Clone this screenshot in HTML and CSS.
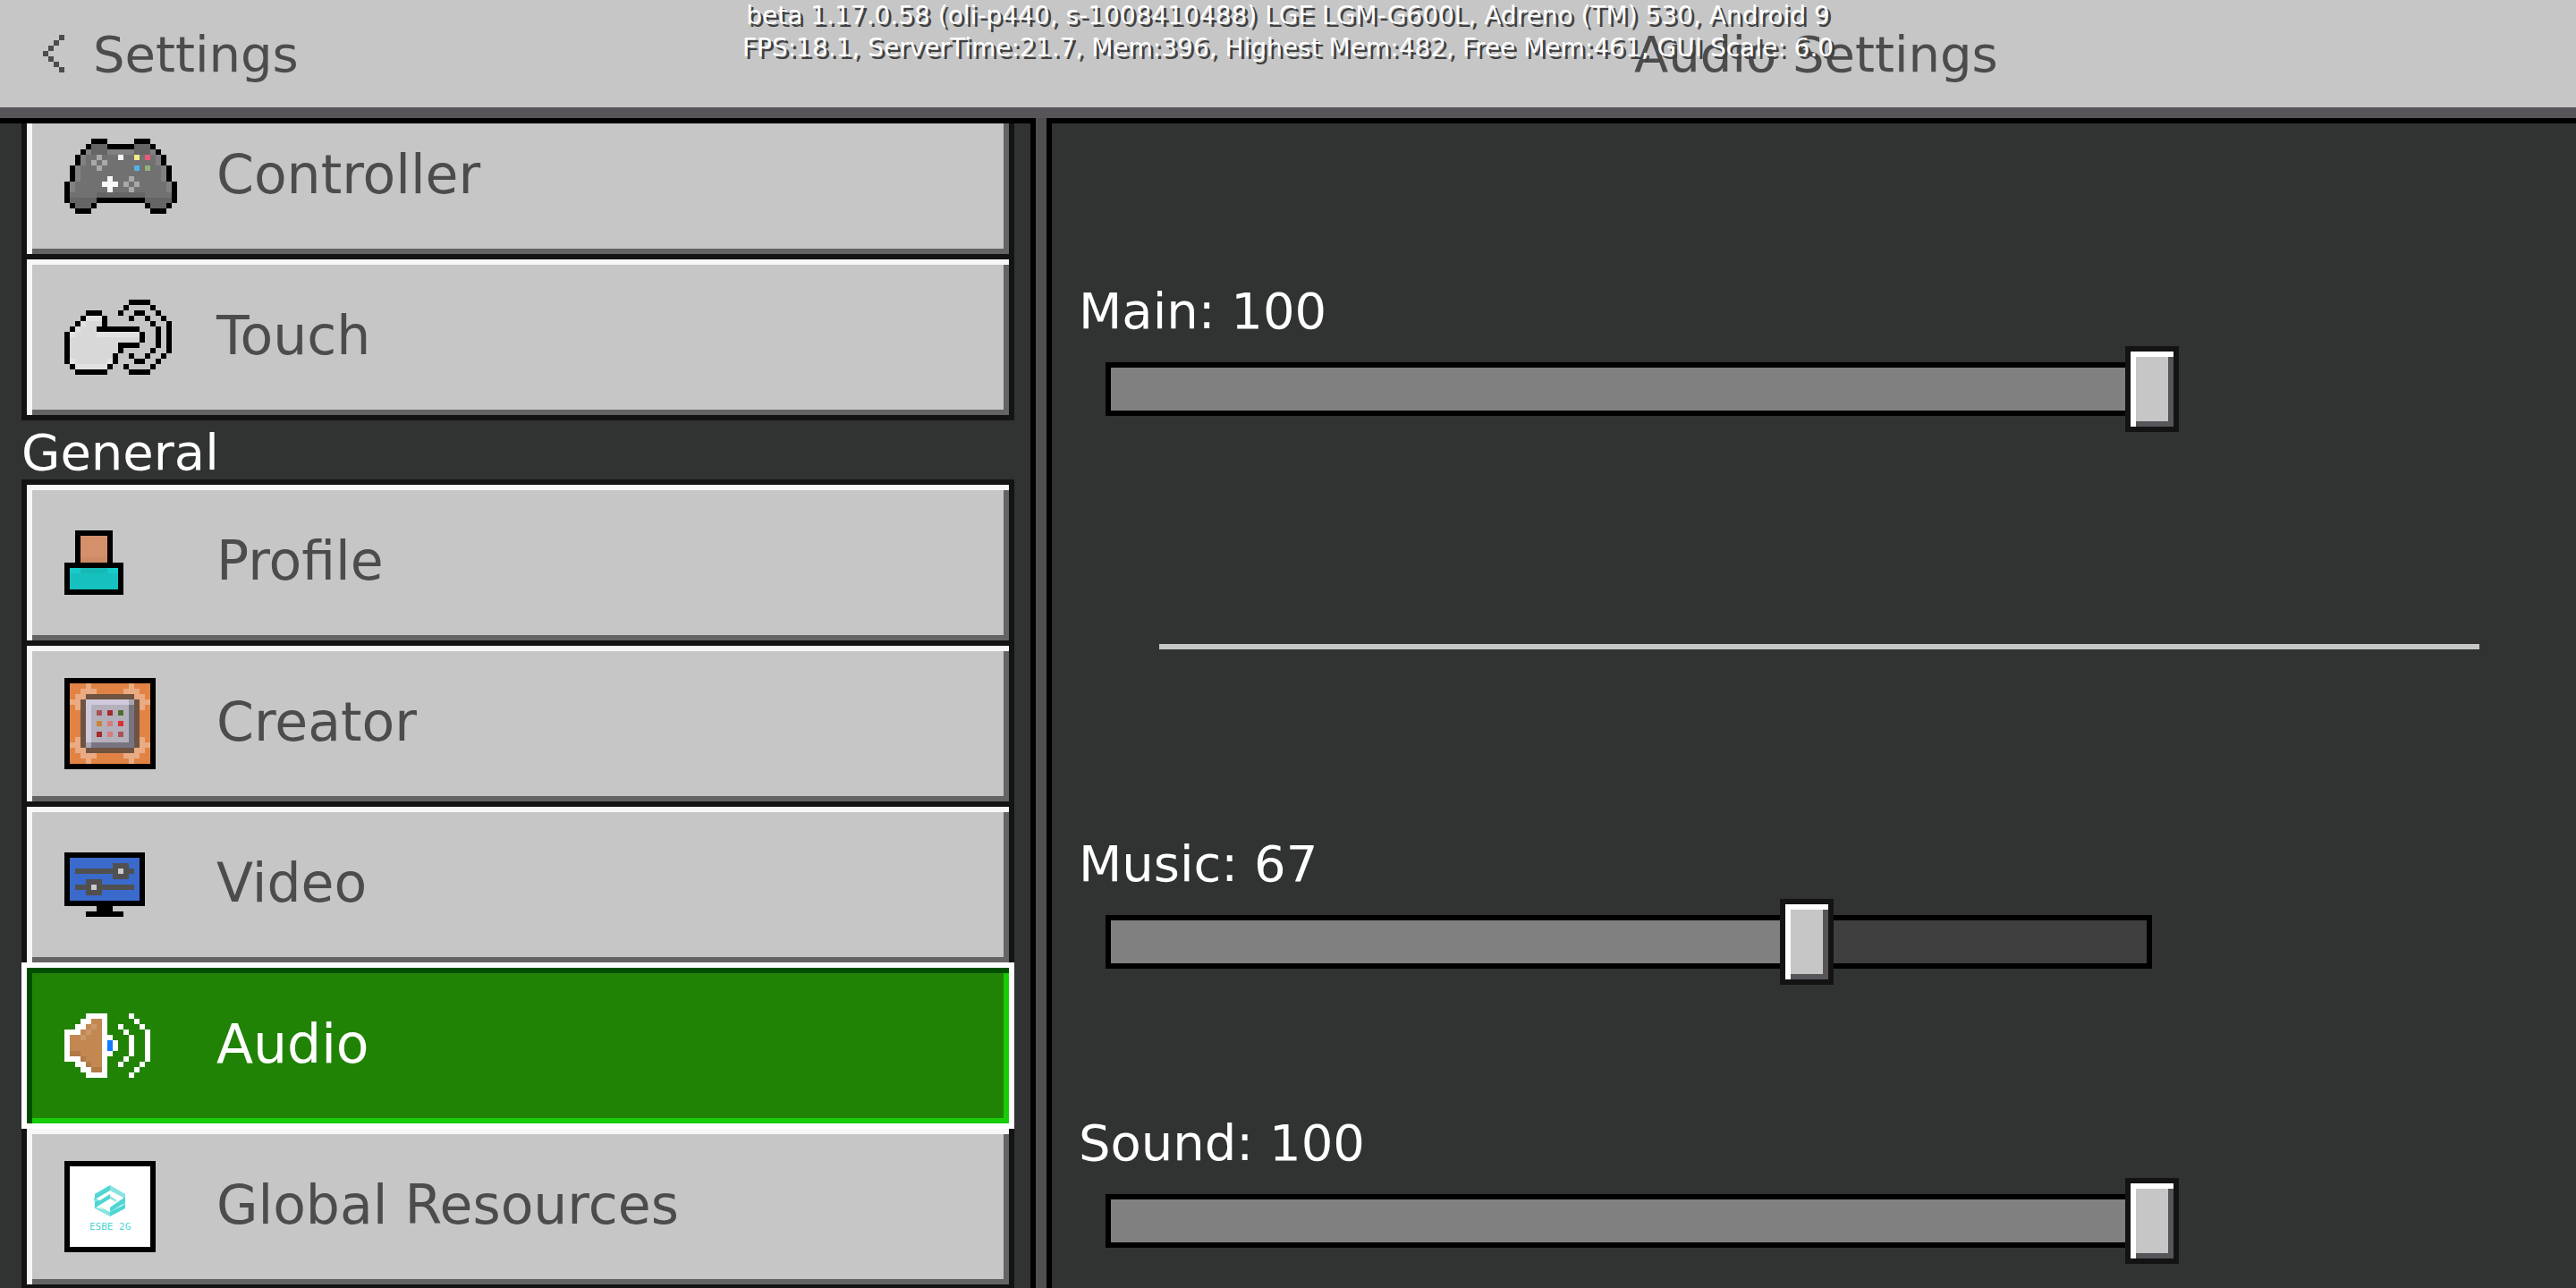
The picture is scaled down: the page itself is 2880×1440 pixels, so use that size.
FILE: index.html
```html
<!DOCTYPE html>
<html lang="en">
<head>
    <meta charset="UTF-8">
    <meta name="viewport" content="width=device-width, initial-scale=1.0">
    <title>Audio Settings</title>
    <link rel="stylesheet" href="styles.css">
</head>
<body>
    <header class="topBar">
        <button class="backButton" type="button">
            <svg class="pixelIcon" width="24" height="42" viewBox="0 0 4 7" aria-hidden="true">
                <g transform="translate(0 .5)"><path stroke="#4c4c4c" d="M3 0h1M2 1h1M1 2h1M0 3h1M1 4h1M2 5h1M3 6h1"/></g>
            </svg>
            Settings
        </button>
        <h1 class="screenTitle">Audio Settings</h1>
    </header>
    <div class="debugText">
        <div>beta 1.17.0.58 (oli-p440, s-1008410488) LGE LGM-G600L, Adreno (TM) 530, Android 9</div>
        <div>FPS:18.1, ServerTime:21.7, Mem:396, Highest Mem:482, Free Mem:461, GUI Scale: 6.0</div>
    </div>
    <main class="screen">
        <nav class="sidebar">
            <div class="navGroup navGroupScrolled">
                <button class="navButton" type="button">
                    <span class="navIcon">
                        <!-- one svg unit is one texture pixel, each path is a set of pixel runs -->
                        <svg class="pixelIcon" width="126" height="84" viewBox="0 0 21 14" aria-hidden="true">
                            <g transform="translate(0 .5)">
                                <path stroke="#717171" d="M4 2h13M3 3h15M3 4h15M2 5h17M2 6h17M2 7h17M1 8h19M1 9h19M1 10h19"/>
                                <path stroke="#646564" d="M5 1h3M13 1h3M5 2h3M13 2h3M6 10h9M1 11h5M15 11h5M2 12h3M16 12h3"/>
                                <path stroke="#838084" d="M4 2h1M8 2h5M16 2h1M3 3h1M17 3h1M3 4h1M17 4h1M2 5h1M18 5h1M2 6h1M18 6h1M2 7h1M18 7h1M1 8h1M19 8h1M1 9h1M19 9h1"/>
                                <path stroke="#000" d="M5 0h3M13 0h3M4 1h1M8 1h5M16 1h1M3 2h1M17 2h1M2 3h1M18 3h1M2 4h1M18 4h1M1 5h1M19 5h1M1 6h1M19 6h1M1 7h1M19 7h1M0 8h1M20 8h1M0 9h1M20 9h1M0 10h1M20 10h1M0 11h1M6 11h9M20 11h1M1 12h1M5 12h1M15 12h1M19 12h1M2 13h3M16 13h3"/>
                                <path stroke="#a9a9ab" d="M6 3h1M5 4h1M7 4h1M6 5h1M12 7h1M11 8h1M13 8h1M12 9h1"/>
                                <path stroke="#f7f7f7" d="M10 3h1M8 7h1M7 8h3M8 9h1"/>
                                <path stroke="#f4ea87" d="M13 3h1"/>
                                <path stroke="#ea5a78" d="M15 3h1"/>
                                <path stroke="#55b0e6" d="M13 5h1"/>
                                <path stroke="#8eb578" d="M15 5h1"/>
                            </g>
                        </svg>
                    </span>
                    <span class="navLabel">Controller</span>
                </button>
                <button class="navButton" type="button">
                    <span class="navIcon">
                        <svg class="pixelIcon" width="120" height="84" viewBox="0 0 20 14" aria-hidden="true">
                            <g transform="translate(0 .5)">
                                <path stroke="#d8d8d8" d="M4 4h3M3 5h3M2 6h4M1 7h13M1 8h9M1 9h9M1 10h8M2 11h6"/>
                                <path stroke="#e2e2e2" d="M4 3h3M3 4h1M2 5h1M1 6h1M6 6h8M1 11h1M8 11h1M2 12h6"/>
                                <path stroke="#000" d="M4 2h3M3 3h1M7 3h1M2 4h1M7 4h1M1 5h1M6 5h8M0 6h1M14 6h1M0 7h1M14 7h1M0 8h1M10 8h4M0 9h1M10 9h1M0 10h1M9 10h1M0 11h1M9 11h1M1 12h1M8 12h1M2 13h6"/>
                                <path stroke="#000" d="M12 0h4M11 1h1M16 1h1M10 2h1M13 2h2M17 2h1M12 3h1M15 3h1M18 3h1M16 4h1M19 4h1M17 5h1M19 5h1M17 6h1M19 6h1M17 7h1M19 7h1M17 8h1M19 8h1M16 9h1M19 9h1M12 10h1M15 10h1M18 10h1M13 11h2M17 11h1M11 12h1M16 12h1M12 13h4"/>
                            </g>
                        </svg>
                    </span>
                    <span class="navLabel">Touch</span>
                </button>
            </div>
            <h2 class="navHeading">General</h2>
            <div class="navGroup">
                <button class="navButton" type="button">
                    <span class="navIcon">
                        <svg class="pixelIcon" width="66" height="72" viewBox="0 0 11 12" aria-hidden="true">
                            <path fill="#000" d="M2 0h7v6h2v6H0V6h2z"/>
                            <path fill="#d4906a" d="M3 1h5v5H3z"/>
                            <path fill="#cd8a66" d="M3 5h5v1H3z"/>
                            <path fill="#15c0bf" d="M1 7h9v4H1z"/>
                            <path fill="#18cbcb" d="M1 7h2v1H1zM8 7h2v1H8z"/>
                            <path fill="#17b9b6" d="M3 7h5v1H3z"/>
                        </svg>
                    </span>
                    <span class="navLabel">Profile</span>
                </button>
                <button class="navButton" type="button">
                    <span class="navIcon">
                        <svg class="pixelIcon" width="102" height="102" viewBox="0 0 17 17" aria-hidden="true">
                            <path fill="#000" d="M0 0h17v17H0z"/>
                            <path fill="#e08344" d="M1 1h15v15H1z"/>
                            <g transform="translate(0 .5)">
                                <path stroke="#eaaa82" d="M4 1h1M12 1h1M3 2h3M11 2h3M2 3h2M13 3h2M1 4h2M14 4h2M2 5h1M14 5h1M2 11h1M14 11h1M1 12h2M14 12h2M2 13h2M13 13h2M3 14h3M11 14h3M4 15h1M12 15h1"/>
                            </g>
                            <path fill="#6f5341" d="M4 3h9v1h1v9h-1v1H4v-1H3V4h1z"/>
                            <path fill="#a9a5b3" d="M4 4h9v9H4z"/>
                            <path fill="#cfcadb" d="M4 4h8v1H5v7H4z"/>
                            <path fill="#787583" d="M12 5h1v8H5v-1h7z"/>
                            <path fill="#b4b0bb" d="M5 5h7v7H5z"/>
                            <g transform="translate(0 .5)">
                                <path stroke="#aa5255" d="M6 6h1M10 10h1"/>
                                <path stroke="#a42a2c" d="M8 6h1M6 10h1"/>
                                <path stroke="#4f6e2d" d="M10 6h1"/>
                                <path stroke="#c68539" d="M6 8h1"/>
                                <path stroke="#d87b7b" d="M8 8h1M8 10h1"/>
                                <path stroke="#d83434" d="M10 8h1"/>
                            </g>
                        </svg>
                    </span>
                    <span class="navLabel">Creator</span>
                </button>
                <button class="navButton" type="button">
                    <span class="navIcon">
                        <svg class="pixelIcon" width="90" height="72" viewBox="0 0 15 12" aria-hidden="true">
                            <path fill="#000" d="M0 0h15v10H9v1h2v1H4v-1h2v-1H0z"/>
                            <path fill="#3a6acb" d="M1 1h13v8H1z"/>
                            <path fill="#505050" d="M2 3h7V2h3v1h1v1h-1v1H9V4H2zM2 6h2V5h3v1h6v1H7v1H4V7H2z"/>
                            <path fill="#cacaca" d="M10 3h1v1h-1zM5 6h1v1H5z"/>
                        </svg>
                    </span>
                    <span class="navLabel">Video</span>
                </button>
                <button class="navButton navButtonSelected" type="button" aria-current="page">
                    <span class="navIcon">
                        <svg class="pixelIcon" width="96" height="72" viewBox="0 0 16 12" aria-hidden="true">
                            <g transform="translate(0 .5)">
                                <path stroke="#c38751" d="M5 1h2M4 2h3M3 3h4M1 4h6M1 5h6M1 6h6M3 7h4M4 8h3M5 9h2"/>
                                <path stroke="#c9986c" d="M5 2h1M4 3h1M3 4h1"/>
                                <path stroke="#b07a49" d="M1 7h2M3 8h1M4 9h1M5 10h2"/>
                                <path stroke="#1478ff" d="M8 5h1M8 6h1"/>
                                <path stroke="#fff" d="M4 0h4M3 1h2M7 1h1M2 2h2M7 2h1M0 3h3M7 3h1M0 4h1M7 4h2M0 5h1M7 5h1M9 5h1M0 6h1M7 6h1M9 6h1M0 7h1M7 7h2M0 8h3M7 8h1M2 9h2M7 9h1M3 10h2M7 10h1M4 11h4"/>
                                <path stroke="#fff" d="M12 0h1M13 1h1M10 2h1M14 2h1M11 3h1M15 3h1M12 4h1M15 4h1M12 5h1M15 5h1M12 6h1M15 6h1M12 7h1M15 7h1M11 8h1M15 8h1M10 9h1M14 9h1M13 10h1M12 11h1"/>
                            </g>
                        </svg>
                    </span>
                    <span class="navLabel">Audio</span>
                </button>
                <button class="navButton" type="button">
                    <span class="navIcon">
                        <svg class="packIcon" width="102" height="102" viewBox="0 0 102 102" aria-hidden="true">
                            <path fill="#000" d="M0 0h102v102H0z"/>
                            <path fill="#fff" d="M6 6h90v90H6z"/>
                            <path fill="#86e3e0" d="M51 27l17 10v5L51 33zM51 37l7 4v5l-7-4zM33 41l3 1 3 2-4 3-2-3zM68 46v2l-3 1-3-1zM37 50l5-2 9 5v6zM33 51l18 6v5L34 53zM34 51l17 6v5L34 53z"/>
                            <path fill="#4fd6d3" d="M51 27v6L34 43v-6zM51 37v5L34 52v-6zM68 40v6L51 58v-6zM68 48v5L51 62v-5z"/>
                            <path fill="#fff" d="M37 43l14-8 14 7-5 3-9-6-11 6zM65 49l-14 8-14-7 5-3 9 6 11-6zM51 45l3 2-3 2-3-2z"/>
                            <path fill="#4fd6d3" d="M51 37v5L35 52v-5zM67 42v5L51 57v-5z"/>
                            <text class="packText" x="28" y="77">ESBE 2G</text>
                        </svg>
                    </span>
                    <span class="navLabel">Global Resources</span>
                </button>
            </div>
        </nav>
        <section class="options">
            <div class="option">
                <label class="optionLabel" for="mainVolume">Main: 100</label>
                <div class="slider">
                    <div class="sliderTrack"><div class="sliderFill" style="width: 100%"></div></div>
                    <input class="sliderInput" id="mainVolume" type="range" min="0" max="100" value="100">
                </div>
            </div>
            <hr class="optionDivider">
            <div class="option">
                <label class="optionLabel" for="musicVolume">Music: 67</label>
                <div class="slider">
                    <div class="sliderTrack"><div class="sliderFill" style="width: 67%"></div></div>
                    <input class="sliderInput" id="musicVolume" type="range" min="0" max="100" value="67">
                </div>
            </div>
            <div class="option optionNext">
                <label class="optionLabel" for="soundVolume">Sound: 100</label>
                <div class="slider">
                    <div class="sliderTrack"><div class="sliderFill" style="width: 100%"></div></div>
                    <input class="sliderInput" id="soundVolume" type="range" min="0" max="100" value="100">
                </div>
            </div>
        </section>
    </main>
</body>
</html>
```

FILE: styles.css
```css
* {
    box-sizing: border-box;
}
body {
    margin: 0;
    height: 100vh;
    display: flex;
    flex-direction: column;
    overflow: hidden;
    background-color: #4f4f4f;
    color: #4c4c4c;
    font-family: "DejaVu Sans", Verdana, sans-serif;
    font-size: 56px;
    user-select: none;
}
button {
    font: inherit;
    color: inherit;
    cursor: pointer;
}

/* top bar */
.topBar {
    flex: none;
    display: grid;
    grid-template-columns: 41% 1fr;
    align-items: center;
    height: 132px;
    background-color: #c6c6c6;
    border-bottom: 12px solid #58555a;
}
.backButton {
    justify-self: start;
    display: flex;
    align-items: center;
    gap: 32px;
    padding: 0 48px;
    border: none;
    background: none;
}
.screenTitle {
    margin: 0;
    font-size: 56px;
    font-weight: normal;
    text-align: center;
}
.debugText {
    position: absolute;
    top: 0;
    left: 0;
    right: 0;
    color: #fff;
    font-size: 28px;
    line-height: 36px;
    text-align: center;
    text-shadow: 3px 3px 0 #404040;
    pointer-events: none;
}

.screen {
    flex: 1;
    display: flex;
    gap: 12px;
    min-height: 0;
}

/* left side */
.sidebar {
    flex: 0 0 auto;
    width: calc(40% + 6px);
    padding: 0 18px 0 24px;
    overflow: hidden;
    background-color: #313332;
    border-top: 6px solid #000;
    border-right: 6px solid #000;
}
.navGroup {
    display: flex;
    flex-direction: column;
}
.navGroupScrolled {
    margin-top: -34px;
}
.navHeading {
    margin: 0;
    height: 66px;
    line-height: 72px;
    font-size: 56px;
    font-weight: normal;
    color: #fff;
}
.navButton {
    display: flex;
    align-items: center;
    height: 186px;
    padding: 0 42px;
    background-color: #c6c6c6;
    border: 6px solid #131313;
    box-shadow: inset 6px 6px 0 #f7f7f7, inset -6px -6px 0 #646464;
    font-size: 60px;
    text-align: left;
}
.navButton + .navButton {
    margin-top: -6px;
}
.navButtonSelected {
    position: relative;
    z-index: 1;
    color: #fff;
    background-color: #218306;
    border-color: #fff;
    box-shadow: inset 6px 6px 0 #004f00, inset -6px -6px 0 #17cd07;
}
.navIcon {
    flex: 0 0 170px;
    display: flex;
}
.navLabel {
    padding-bottom: 4px;
}
.pixelIcon {
    shape-rendering: crispEdges;
}
.packText {
    font-family: "DejaVu Sans Mono", monospace;
    font-size: 11px;
    fill: #4fd6d3;
}

/* right side */
.options {
    flex: 1;
    padding: 171px 34px 0 30px;
    overflow: hidden;
    background-color: #313332;
    border-top: 6px solid #000;
    border-left: 6px solid #000;
}
.option {
    width: 75%;
}
.optionNext {
    margin-top: 138px;
}
.optionLabel {
    display: block;
    line-height: 78px;
    color: #fff;
}
.optionDivider {
    height: 6px;
    margin: 237px 74px 201px 90px;
    border: none;
    background-color: #c6c6c6;
}
.slider {
    display: grid;
    align-items: center;
}
/* the handle hangs half its width over each end of the track */
.sliderTrack {
    grid-area: 1 / 1;
    height: 60px;
    margin: 0 30px;
    border: 6px solid #000;
    background-color: #3f3f3f;
}
.sliderFill {
    height: 100%;
    background-color: #808080;
}
.sliderInput {
    grid-area: 1 / 1;
    -webkit-appearance: none;
    appearance: none;
    width: 100%;
    height: 96px;
    margin: 0;
    background: none;
}
.sliderInput::-webkit-slider-thumb {
    -webkit-appearance: none;
    width: 60px;
    height: 96px;
    background-color: #c6c6c6;
    border: 6px solid #131313;
    box-shadow: inset 6px 6px 0 #fff, inset -6px -6px 0 #58555a;
}
```
